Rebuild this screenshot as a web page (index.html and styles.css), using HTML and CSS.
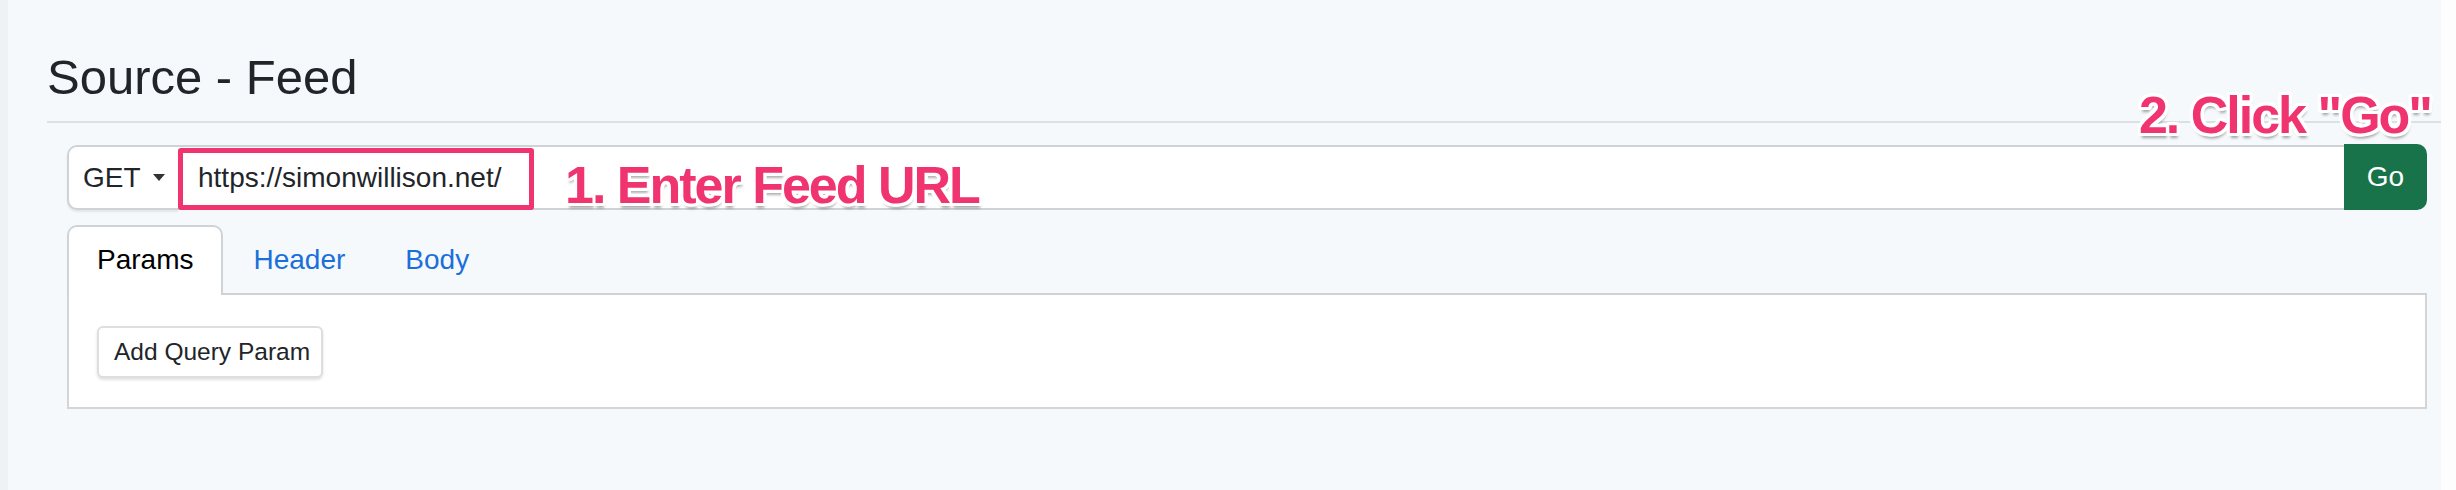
FILE: index.html
```html
<!DOCTYPE html>
<html lang="en">
<head>
<meta charset="utf-8">
<title>Source - Feed</title>
<link rel="stylesheet" href="styles.css">
</head>
<body>
<div class="page">
  <div class="gutter-left"></div>
  <main class="content">
    <h2 class="title">Source - Feed</h2>
    <hr class="rule">
    <section class="request">
      <div class="request-bar">
        <button class="method" type="button">GET<span class="caret"></span></button>
        <div class="url">https://simonwillison.net/</div>
        <div class="url-rest"></div>
        <button class="go" type="button">Go</button>
        <div class="highlight"></div>
        <span class="note note-1">1. Enter Feed URL</span>
      </div>
      <ul class="tabs">
        <li class="tab active">Params</li>
        <li class="tab">Header</li>
        <li class="tab">Body</li>
      </ul>
      <div class="panel">
        <button class="add" type="button">Add Query Param</button>
      </div>
    </section>
    <span class="note note-2">2. Click "Go"</span>
  </main>
  <div class="gutter-right"></div>
</div>
</body>
</html>
```
FILE: styles.css
```css
* { box-sizing: border-box; }
html, body { margin: 0; padding: 0; }
body {
  font-family: "Liberation Sans", Arial, Helvetica, sans-serif;
  color: #212529;
  background: #f5f9fc;
}
.page {
  display: flex;
  height: 490px;
}
.gutter-left {
  width: 8px;
  background: #eef2f5;
}
.gutter-right {
  width: 15px;
  background: #fdfdfd;
}
.content {
  position: relative;
  flex: 1;
  background: #f5f9fc;
  padding: 48px 0 0 39px;
}
.title {
  margin: 0;
  font-weight: 400;
  font-size: 49px;
  line-height: 59px;
  color: #212529;
}
.rule {
  margin: 14px 0 0 0;
  border: 0;
  border-top: 2px solid #dcdfe3;
  height: 0;
}
.request {
  margin: 22px 14px 0 20px;
}
.request-bar {
  position: relative;
  display: flex;
  height: 65px;
}
.method {
  display: flex;
  align-items: center;
  width: 111px;
  height: 65px;
  padding: 0 0 0 14px;
  border: 2px solid #d0d3d6;
  border-right: 0;
  border-radius: 10px 0 0 10px;
  background: #fff;
  box-shadow: 0 2px 2px rgba(0, 0, 0, 0.08);
  font-family: inherit;
  font-size: 28px;
  color: #212529;
}
.caret {
  display: inline-block;
  margin-left: 12px;
  border-left: 6px solid transparent;
  border-right: 6px solid transparent;
  border-top: 7px solid #333;
}
.url {
  display: flex;
  align-items: center;
  width: 356px;
  height: 65px;
  padding-left: 20px;
  background: #fff;
  border-top: 2px solid #d0d3d6;
  border-bottom: 2px solid #d0d3d6;
  font-size: 28px;
  color: #212529;
}
.url-rest {
  flex: 1;
  height: 65px;
  background: #fff;
  border-top: 2px solid #d0d3d6;
  border-bottom: 2px solid #d0d3d6;
}
.go {
  width: 83px;
  height: 66px;
  margin-top: -1px;
  border: 0;
  border-radius: 0 10px 10px 0;
  background: #18734a;
  color: #fff;
  font-family: inherit;
  font-size: 28px;
}
.highlight {
  position: absolute;
  left: 111px;
  top: 3px;
  width: 356px;
  height: 62px;
  border: 5px solid #ef3470;
  border-radius: 3px;
}
.note {
  position: absolute;
  font-weight: 700;
  font-size: 52px;
  line-height: 52px;
  letter-spacing: -2px;
  color: #ef3470;
  white-space: nowrap;
  text-shadow:
    3px 0 0 #fff, -3px 0 0 #fff, 0 3px 0 #fff, 0 -3px 0 #fff,
    2px 2px 0 #fff, -2px 2px 0 #fff, 2px -2px 0 #fff, -2px -2px 0 #fff,
    3px 2px 0 #fff, -3px 2px 0 #fff, 3px -2px 0 #fff, -3px -2px 0 #fff,
    2px 3px 0 #fff, -2px 3px 0 #fff, 2px -3px 0 #fff, -2px -3px 0 #fff,
    1px 5px 3px rgba(0, 0, 0, 0.35);
}
.note-1 {
  left: 498px;
  top: 14px;
}
.note-2 {
  right: 10px;
  top: 89px;
}
.tabs {
  display: flex;
  list-style: none;
  margin: 15px 0 0 0;
  padding: 0;
  border-bottom: 2px solid #d0d3d6;
}
.tab {
  padding: 17px 28px 19px;
  margin-bottom: -2px;
  border: 2px solid transparent;
  border-bottom: 0;
  font-size: 28px;
  line-height: 32px;
  color: #1b6fdb;
}
.tab.active {
  background: #fff;
  color: #000;
  border-color: #d0d3d6;
  border-radius: 10px 10px 0 0;
}
.panel {
  background: #fff;
  border: 2px solid #d3d5d8;
  border-top: 0;
  padding: 31px 28px 29px;
}
.add {
  display: block;
  width: 226px;
  height: 52px;
  padding: 0 0 0 15px;
  text-align: left;
  border: 2px solid #dcdee1;
  border-radius: 6px;
  background: #fff;
  box-shadow: 0 2px 3px rgba(0, 0, 0, 0.12);
  font-family: inherit;
  font-size: 24.5px;
  color: #212529;
}
```
